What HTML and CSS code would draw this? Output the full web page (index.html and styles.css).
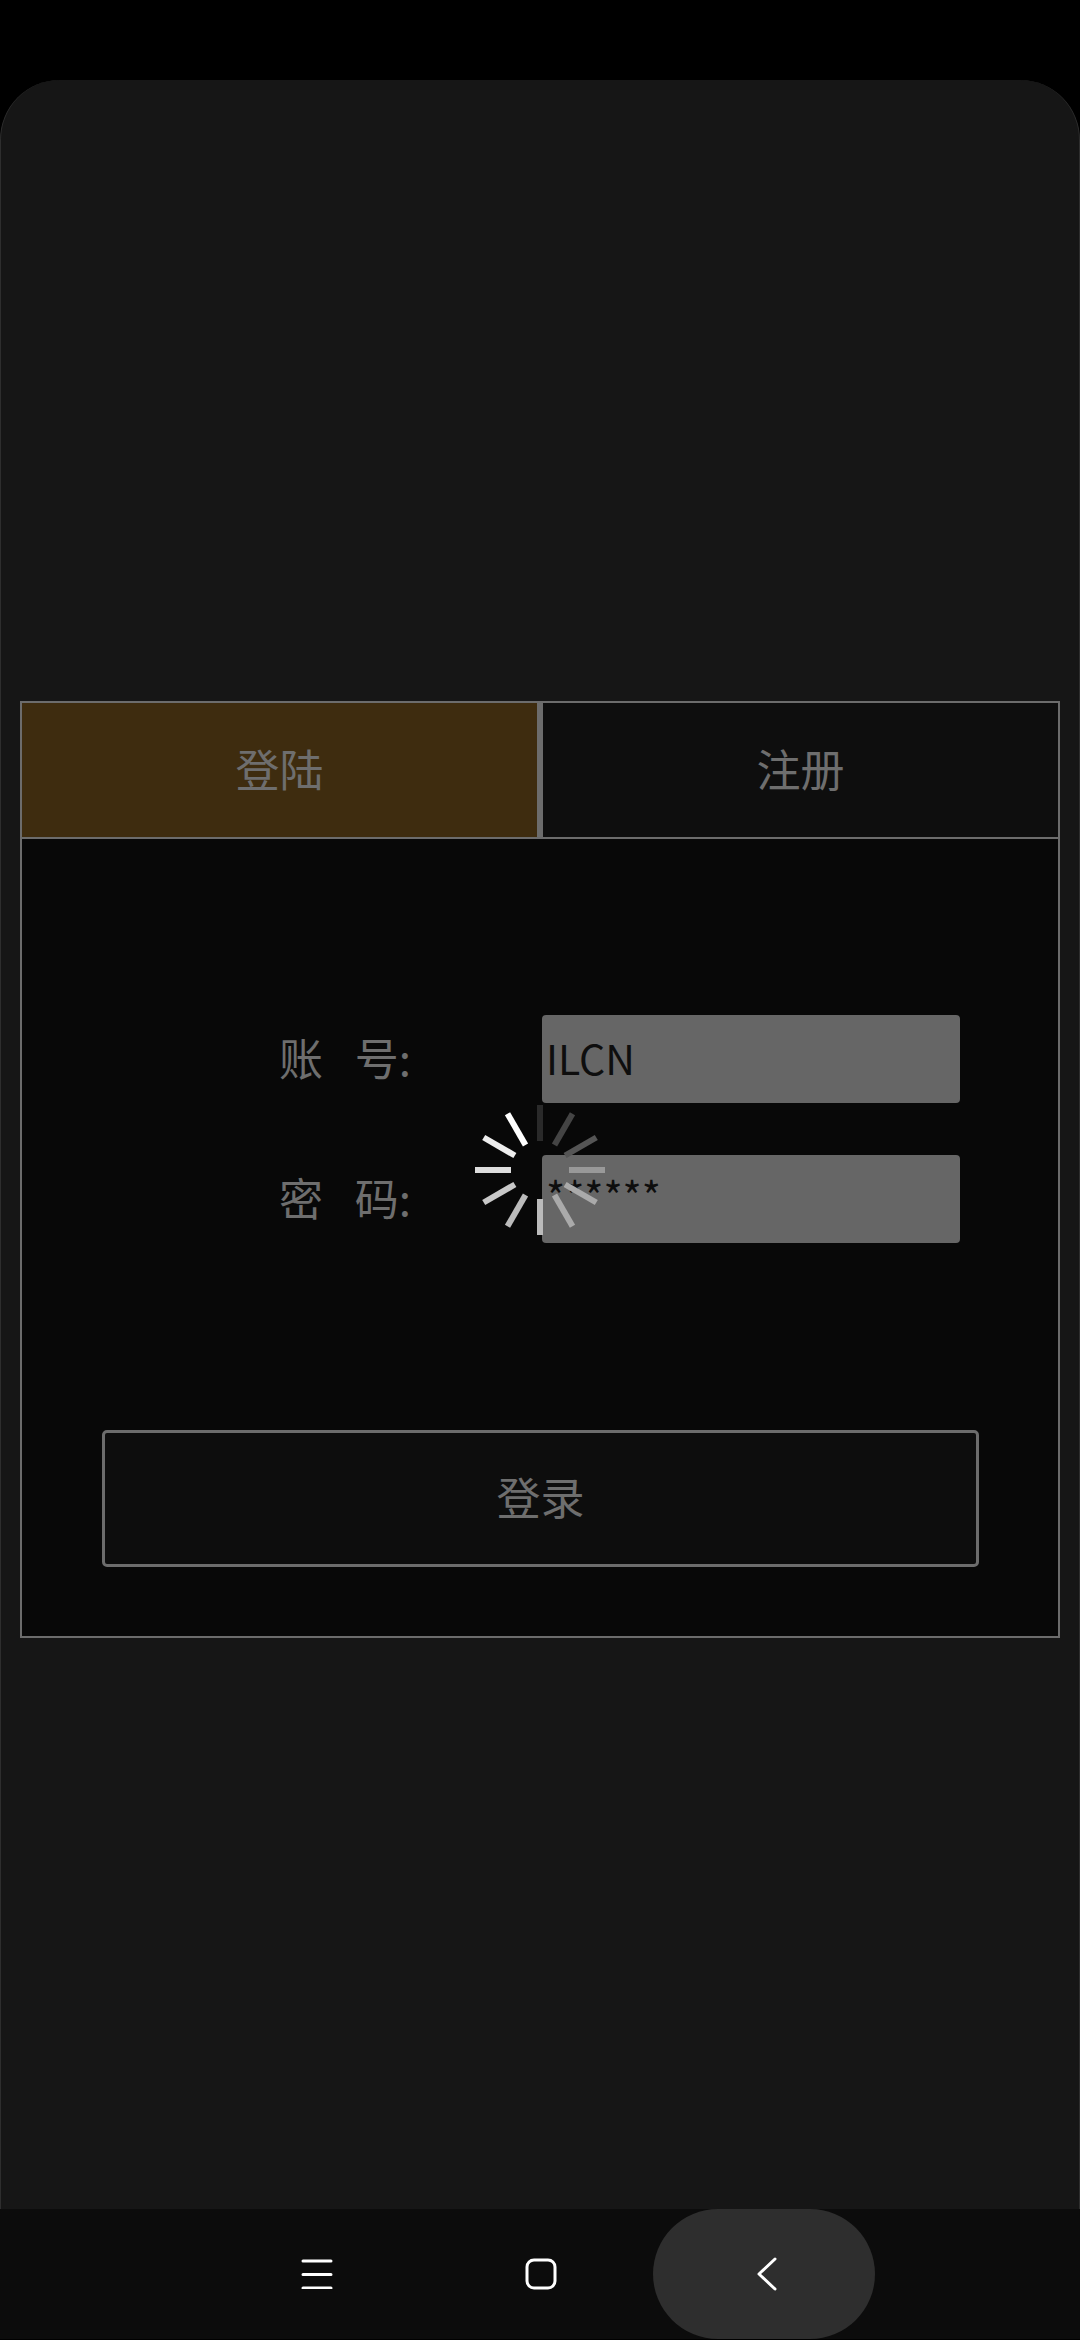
FILE: index.html
```html
<!DOCTYPE html>
<html lang="zh-CN">
<head>
  <meta charset="UTF-8">
  <meta name="viewport" content="width=device-width, initial-scale=1.0">
  <title>登陆</title>
  <link rel="stylesheet" href="styles.css">
</head>
<body>
  <div class="page">
    <div class="sheet">
      <section class="panel">
        <div class="tabs">
          <div class="tab active">登陆</div>
          <div class="tab">注册</div>
        </div>
        <div class="form">
          <div class="row">
            <span class="label">账 号:</span>
            <div class="field">ILCN</div>
          </div>
          <div class="row">
            <span class="label">密 码:</span>
            <div class="field secret">******</div>
          </div>
          <div class="submit">登录</div>
        </div>
      </section>
    </div>

    <nav class="navbar">
      <div class="nav-item menu">
        <svg width="32" height="30" viewBox="0 0 32 30" fill="none" stroke="#fff" stroke-width="3" stroke-linecap="round">
          <path d="M2 2H30M2 15.500H30M2 29H30"/>
        </svg>
      </div>
      <div class="nav-item home">
        <svg width="32" height="32" viewBox="0 0 32 32" fill="none" stroke="#fff" stroke-width="3">
          <rect x="2" y="2" width="28" height="28" rx="7"/>
        </svg>
      </div>
      <div class="nav-item back">
        <svg width="22" height="34" viewBox="0 0 22 34" fill="none" stroke="#fff" stroke-width="3" stroke-linecap="round" stroke-linejoin="round">
          <path d="M19 2L3 17L19 32"/>
        </svg>
      </div>
    </nav>

    <!-- loading spinner on top of the form -->
    <svg class="spinner" width="140" height="140" viewBox="-70 -70 140 140">
      <rect x="-3" y="-65" width="6" height="36" fill="#2a2a2a"/>
      <rect x="-3" y="-65" width="6" height="36" fill="#444" transform="rotate(30)"/>
      <rect x="-3" y="-65" width="6" height="36" fill="#555" transform="rotate(60)"/>
      <rect x="-3" y="-65" width="6" height="36" fill="#999" transform="rotate(90)"/>
      <rect x="-3" y="-65" width="6" height="36" fill="#aaa" transform="rotate(120)"/>
      <rect x="-3" y="-65" width="6" height="36" fill="#aaa" transform="rotate(150)"/>
      <rect x="-3" y="-65" width="6" height="36" fill="#bbb" transform="rotate(180)"/>
      <rect x="-3" y="-65" width="6" height="36" fill="#bbb" transform="rotate(210)"/>
      <rect x="-3" y="-65" width="6" height="36" fill="#c8c8c8" transform="rotate(240)"/>
      <rect x="-3" y="-65" width="6" height="36" fill="#ddd" transform="rotate(270)"/>
      <rect x="-3" y="-65" width="6" height="36" fill="#eee" transform="rotate(300)"/>
      <rect x="-3" y="-65" width="6" height="36" fill="#fff" transform="rotate(330)"/>
    </svg>
  </div>
</body>
</html>
```

FILE: styles.css
```css
* {
  box-sizing: border-box;
}

body {
  margin: 0;
  background-color: #000;
  font-family: "Noto Sans CJK SC", "Noto Sans", sans-serif;
  color: #6e6e6e;
}

.page {
  position: relative;
  display: flex;
  flex-direction: column;
  width: 1080px;
  height: 2340px;
  padding-top: 80px;
}

.sheet {
  flex: 1;
  padding: 621px 20px 0 20px;
  background-color: #161616;
  border-left: 1px solid #2e2e2e;
  border-right: 1px solid #2e2e2e;
  border-radius: 60px 60px 0 0;
}

.panel {
  height: 937px;
  margin-right: -1px;
  margin-left: -1px;
  background-color: #080808;
  border: 2px solid #6c6c6c;
}

.tabs {
  display: flex;
  height: 136px;
  border-bottom: 2px solid #6c6c6c;
}

.tab {
  flex: 1;
  display: flex;
  align-items: center;
  justify-content: center;
  padding-bottom: 5px;
  font-size: 44px;
  background-color: #0e0e0e;
}

.tab.active {
  background-color: #3e2c0f;
  border-right: 6px solid #6c6c6c;
}

.form {
  padding-top: 176px;
}

.row {
  display: flex;
  align-items: center;
  height: 88px;
  margin-bottom: 52px;
}

.label {
  width: 261px;
  padding-left: 257px;
  padding-bottom: 5px;
  flex: none;
  margin-right: 259px;
  font-size: 44px;
  word-spacing: 22px;
  white-space: nowrap;
}

.field {
  width: 418px;
  height: 88px;
  padding-left: 4px;
  background-color: #666;
  border-radius: 4px;
  color: #0e0e0e;
  font-size: 41px;
  line-height: 85px;
}

.field.secret {
  line-height: 78px;
}

.submit {
  display: flex;
  align-items: center;
  justify-content: center;
  width: 877px;
  height: 137px;
  padding-bottom: 5px;
  margin: 187px 0 0 80px;
  background-color: #0d0d0d;
  border: 3px solid #6c6c6c;
  border-radius: 5px;
  font-size: 44px;
}

.navbar {
  display: flex;
  align-items: center;
  height: 130px;
  flex: none;
  margin-bottom: 1px;
  padding-left: 301px;
  background-color: #0c0c0c;
}

.nav-item {
  display: flex;
  align-items: center;
  justify-content: center;
}

.menu {
  width: 32px;
  margin-right: 192px;
}

.home {
  width: 32px;
  margin-right: 96px;
}

.back {
  width: 222px;
  height: 130px;
  padding-left: 6px;
  background-color: #2e2e2e;
  border-radius: 65px;
}

.spinner {
  position: absolute;
  left: 470px;
  top: 1100px;
}
```
